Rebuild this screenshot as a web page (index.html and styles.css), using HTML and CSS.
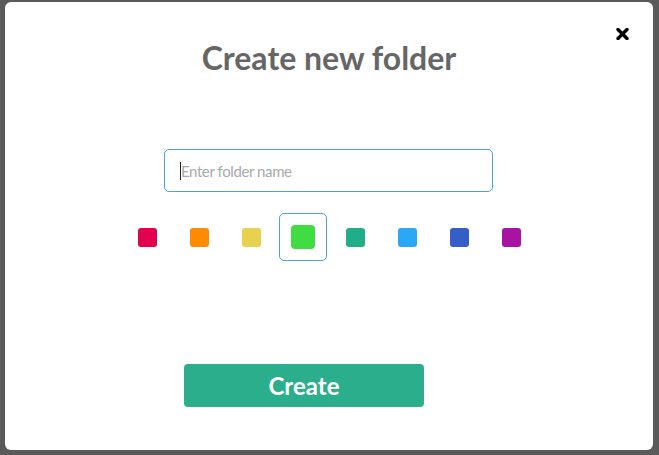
FILE: index.html
```html
<!DOCTYPE html>
<html lang="en">
<head>
<meta charset="utf-8">
<title>Create new folder</title>
<link rel="stylesheet" href="styles.css">
</head>
<body>
<div class="backdrop">
  <div class="modal">
    <button class="close" aria-label="Close">
      <svg width="13" height="12" viewBox="0 0 13 12"><path d="M2 1.5 L11 10.5 M11 1.5 L2 10.5" stroke="#000" stroke-width="3.4" stroke-linecap="round" fill="none"/></svg>
    </button>
    <h1 class="title">Create new folder</h1>
    <div class="field">
      <input class="name-input" type="text" placeholder="Enter folder name">
      <span class="caret"></span>
    </div>
    <div class="swatches">
      <div class="slot"><span class="sw c-red"></span></div>
      <div class="slot"><span class="sw c-orange"></span></div>
      <div class="slot"><span class="sw c-yellow"></span></div>
      <div class="slot selected"><span class="sw c-green"></span></div>
      <div class="slot"><span class="sw c-teal"></span></div>
      <div class="slot"><span class="sw c-blue"></span></div>
      <div class="slot"><span class="sw c-navy"></span></div>
      <div class="slot"><span class="sw c-purple"></span></div>
    </div>
    <div class="actions">
      <button class="create">Create</button>
    </div>
  </div>
</div>
</body>
</html>
```
FILE: styles.css
```css
* { box-sizing: border-box; }
html, body { margin: 0; padding: 0; }
body {
  width: 659px;
  height: 455px;
  background: #5a5a5a;
  font-family: Lato, "Open Sans", sans-serif;
  overflow: hidden;
}
.backdrop {
  padding: 2px 6px 0 5px;
}
.modal {
  position: relative;
  width: 648px;
  height: 448px;
  background: #fff;
  border-radius: 6px;
  padding-top: 37px;
}
.close {
  position: absolute;
  top: 26px;
  right: 24px;
  width: 13px;
  height: 12px;
  padding: 0;
  border: 0;
  background: none;
  display: block;
}
.close svg { display: block; }
.title {
  margin: 0;
  text-align: center;
  font-size: 32px;
  line-height: 38px;
  font-weight: 700;
  color: #666;
}
.field {
  position: relative;
  width: 329px;
  margin: 72px auto 0 159px;
}
.name-input {
  display: block;
  width: 329px;
  height: 43px;
  border: 1px solid #4aa6d6;
  border-radius: 5px;
  padding: 0 0 0 16px;
  font-family: Lato, sans-serif;
  font-size: 15px;
  letter-spacing: -0.4px;
  color: #333;
  outline: none;
}
.name-input::placeholder { color: #a8a8a8; }
.caret {
  position: absolute;
  left: 16px;
  top: 13px;
  width: 1px;
  height: 18px;
  background: #222;
}
.swatches {
  display: flex;
  gap: 4px;
  justify-content: center;
  margin-top: 21px;
}
.slot {
  width: 48px;
  height: 48px;
  display: flex;
  align-items: center;
  justify-content: center;
  border: 1px solid transparent;
  border-radius: 5px;
}
.slot.selected { border-color: #4aa6d6; }
.sw {
  width: 19px;
  height: 19px;
  border-radius: 3px;
}
.selected .sw {
  width: 24px;
  height: 24px;
  border-radius: 4px;
}
.c-red { background: #e2004f; }
.c-orange { background: #ff8c00; }
.c-yellow { background: #e8d14e; }
.c-green { background: #3fdc42; }
.c-teal { background: #1fae87; }
.c-blue { background: #2aa8f7; }
.c-navy { background: #345fc9; }
.c-purple { background: #a913a4; }
.actions {
  margin-top: 103px;
  padding-left: 179px;
}
.create {
  display: block;
  width: 240px;
  height: 43px;
  border: 0;
  border-radius: 4px;
  background: #2bae8c;
  color: #fff;
  font-family: Lato, sans-serif;
  font-weight: 700;
  font-size: 24px;
  padding: 0;
}
```
